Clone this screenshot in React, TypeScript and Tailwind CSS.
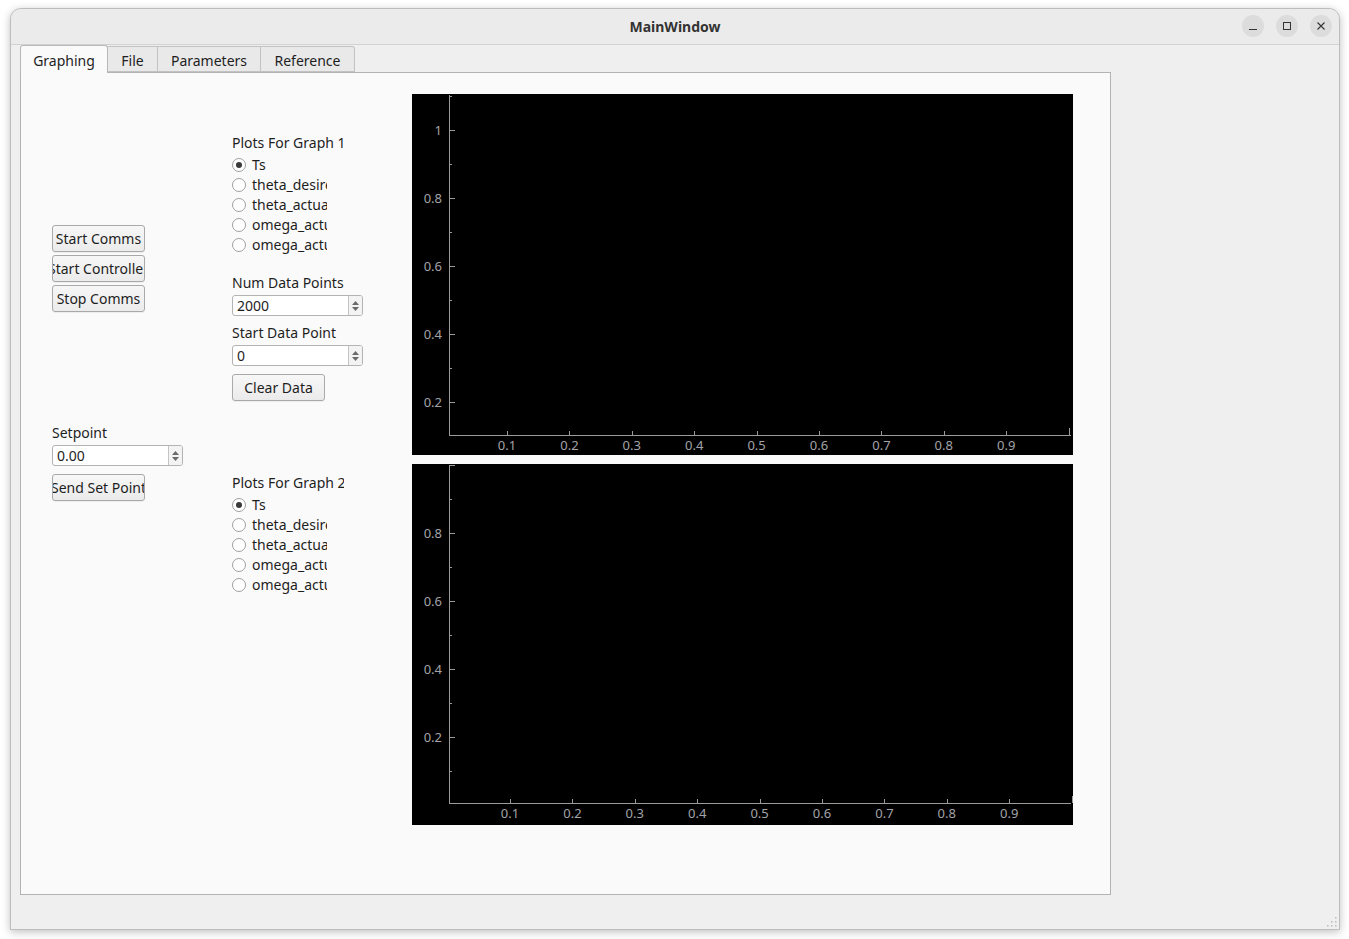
import React from 'react';

const FONT = { fontFamily: '"Noto Sans", "Open Sans", sans-serif' };

const Radio = ({ label, checked }: { label: string; checked?: boolean }) => (
  <div className="flex items-center h-5 w-[95px] overflow-hidden whitespace-nowrap">
    <span className="w-[14px] h-[14px] rounded-full border border-[#a0a0a0] bg-white grid place-items-center shrink-0">
      {checked && <span className="w-[6px] h-[6px] rounded-full bg-[#3a3a3a]" />}
    </span>
    <span className="ml-[6px] text-[14px] text-[#1e1e1e] leading-none">{label}</span>
  </div>
);

const Button = ({ label, w = 'w-[93px]' }: { label: string; w?: string }) => (
  <div
    className={`${w} h-[27px] flex items-center justify-center overflow-hidden whitespace-nowrap rounded-[3px] border border-[#a9a9a9] bg-gradient-to-b from-[#f7f7f7] to-[#ebebeb] text-[14px] text-[#1e1e1e] shadow-[0_1px_0_rgba(0,0,0,0.05)]`}
  >
    {label}
  </div>
);

const SpinBox = ({ value, w }: { value: string; w: string }) => (
  <div className={`${w} h-[21px] flex rounded-[3px] border border-[#b3b3b3] bg-white overflow-hidden`}>
    <div className="flex-1 flex items-center pl-[4px] text-[14px] text-[#1e1e1e] leading-none">{value}</div>
    <div className="w-[14px] border-l border-[#c4c4c4] bg-[#f3f3f3] flex flex-col items-center justify-center gap-[2px]">
      <svg width="7" height="4" viewBox="0 0 7 4">
        <path d="M0 4L3.5 0L7 4Z" fill="#6a6a6a" />
      </svg>
      <svg width="7" height="4" viewBox="0 0 7 4">
        <path d="M0 0L3.5 4L7 0Z" fill="#6a6a6a" />
      </svg>
    </div>
  </div>
);

interface PlotCfg {
  yTop: number;
  yBottom: number;
  y0: number; // pixel of value 0
  x0: number; // pixel of value 0 on x
  yTicks: number[];
  yLabels: number[];
}

const Plot = ({ cfg }: { cfg: PlotCfg }) => {
  const ax = 37;
  const grey = '#9a9a9a';
  const ypx = (v: number) => cfg.y0 - 340 * v;
  const xpx = (v: number) => cfg.x0 + 624 * v;
  const xs = [0.1, 0.2, 0.3, 0.4, 0.5, 0.6, 0.7, 0.8, 0.9];
  return (
    <svg width="661" height="361" viewBox="0 0 661 361" className="block bg-black">
      <line x1={ax + 0.5} y1={cfg.yTop} x2={ax + 0.5} y2={cfg.yBottom + 0.5} stroke={grey} />
      <line x1={ax} y1={cfg.yBottom + 0.5} x2={659} y2={cfg.yBottom + 0.5} stroke={grey} />
      {cfg.yTicks.map((v) => {
        const major = cfg.yLabels.includes(v) || Math.abs(v - 1) < 0.001;
        const y = Math.round(ypx(v)) + 0.5;
        return <line key={v} x1={ax} y1={y} x2={ax + (major ? 6 : 3)} y2={y} stroke={grey} />;
      })}
      {cfg.yLabels.map((v) => (
        <text key={v} x={30} y={ypx(v) + 5} textAnchor="end" fill="#a3a3a8" fontSize="13" style={FONT}>
          {v === 1 ? '1' : v.toFixed(1)}
        </text>
      ))}
      {[...xs, 1].map((v) => {
        const x = Math.round(xpx(v)) + 0.5;
        return (
          <line key={v} x1={x} y1={cfg.yBottom} x2={x} y2={cfg.yBottom - (v === 1 ? 7 : 4)} stroke={grey} />
        );
      })}
      {xs.map((v) => (
        <text key={v} x={xpx(v)} y={cfg.yBottom + 15} textAnchor="middle" fill="#a3a3a8" fontSize="13" style={FONT}>
          {v.toFixed(1)}
        </text>
      ))}
    </svg>
  );
};

const plot1: PlotCfg = {
  yTop: 1,
  yBottom: 341,
  y0: 376,
  x0: 32.6,
  yTicks: [0.2, 0.3, 0.4, 0.5, 0.6, 0.7, 0.8, 0.9, 1.0, 1.1],
  yLabels: [0.2, 0.4, 0.6, 0.8, 1],
};

const plot2: PlotCfg = {
  yTop: 1,
  yBottom: 339,
  y0: 341,
  x0: 35.6,
  yTicks: [0.1, 0.2, 0.3, 0.4, 0.5, 0.6, 0.7, 0.8, 0.9, 1.0],
  yLabels: [0.2, 0.4, 0.6, 0.8],
};

const PlotChoices = ({ n }: { n: number }) => (
  <div className="flex flex-col">
    <div className="w-[112px] h-[17px] overflow-hidden whitespace-nowrap text-[14px] text-[#1e1e1e] leading-[17px]">
      Plots For Graph {n}
    </div>
    <div className="flex flex-col mt-[4px]">
      <Radio label="Ts" checked />
      <Radio label="theta_desired" />
      <Radio label="theta_actual" />
      <Radio label="omega_actual" />
      <Radio label="omega_actual" />
    </div>
  </div>
);

export default function App() {
  return (
    <div className="w-[1349px] h-[939px] bg-white overflow-hidden" style={FONT}>
      <div className="ml-[10px] mt-[8px] w-[1330px] h-[922px] flex flex-col rounded-t-[11px] border border-[#bdbdbd] bg-[#efefef] shadow-[0_2px_8px_rgba(0,0,0,0.25)] overflow-hidden">
        {/* Title bar */}
        <div className="h-[36px] shrink-0 flex items-center bg-[#ebebeb] border-b border-[#d2d2d2] relative">
          <div className="flex-1 text-center text-[14px] font-bold text-[#333333]">MainWindow</div>
          <div className="absolute right-[7px] top-[6px] flex gap-[12px]">
            <span className="w-[22px] h-[22px] rounded-full bg-[#dcdcdc] grid place-items-center">
              <svg width="10" height="10" viewBox="0 0 10 10">
                <line x1="1" y1="8.5" x2="9" y2="8.5" stroke="#333" strokeWidth="1" />
              </svg>
            </span>
            <span className="w-[22px] h-[22px] rounded-full bg-[#dcdcdc] grid place-items-center">
              <svg width="10" height="10" viewBox="0 0 10 10">
                <rect x="1.5" y="1.5" width="7" height="7" fill="none" stroke="#333" strokeWidth="1" />
              </svg>
            </span>
            <span className="w-[22px] h-[22px] rounded-full bg-[#dcdcdc] grid place-items-center">
              <svg width="10" height="10" viewBox="0 0 10 10">
                <path d="M1.5 1.5L8.5 8.5M8.5 1.5L1.5 8.5" stroke="#333" strokeWidth="1.1" />
              </svg>
            </span>
          </div>
        </div>

        {/* Body */}
        <div className="flex-1 pl-[9px] relative">
          {/* Tabs */}
          <div className="flex items-end h-[27px]">
            <div className="w-[88px] h-[28px] -mb-px z-10 flex items-center justify-center pt-[2px] bg-[#fafafa] border border-b-0 border-[#b8b8b8] rounded-t-[3px] text-[14px] text-[#1e1e1e]">
              Graphing
            </div>
            <div className="w-[50px] h-[26px] flex items-center justify-center pt-[2px] bg-[#e9e9e9] border border-l-0 border-[#c2c2c2] text-[14px] text-[#1e1e1e]">
              File
            </div>
            <div className="w-[103px] h-[26px] flex items-center justify-center pt-[2px] bg-[#e9e9e9] border border-l-0 border-[#c2c2c2] text-[14px] text-[#1e1e1e]">
              Parameters
            </div>
            <div className="w-[94px] h-[26px] flex items-center justify-center pt-[2px] bg-[#e9e9e9] border border-l-0 border-[#c2c2c2] rounded-tr-[3px] text-[14px] text-[#1e1e1e]">
              Reference
            </div>
          </div>

          {/* Pane */}
          <div className="w-[1091px] h-[823px] bg-[#fafafa] border border-[#b3b3b3] flex pt-[21px] pl-[31px]">
            {/* Column 1 */}
            <div className="w-[180px] flex flex-col pt-[131px]">
              <div className="flex flex-col gap-[3px]">
                <Button label="Start Comms" />
                <Button label="Start Controller" />
                <Button label="Stop Comms" />
              </div>
              <div className="mt-[112px] text-[14px] text-[#1e1e1e] leading-[17px]">Setpoint</div>
              <div className="mt-[4px]">
                <SpinBox value="0.00" w="w-[131px]" />
              </div>
              <div className="mt-[8px]">
                <Button label="Send Set Point" />
              </div>
            </div>

            {/* Column 2 */}
            <div className="w-[180px] flex flex-col pt-[40px]">
              <PlotChoices n={1} />
              <div className="mt-[19px] w-[112px] overflow-hidden whitespace-nowrap text-[14px] text-[#1e1e1e] leading-[17px]">
                Num Data Points
              </div>
              <div className="mt-[4px]">
                <SpinBox value="2000" w="w-[131px]" />
              </div>
              <div className="mt-[8px] text-[14px] text-[#1e1e1e] leading-[17px] whitespace-nowrap">Start Data Point</div>
              <div className="mt-[4px]">
                <SpinBox value="0" w="w-[131px]" />
              </div>
              <div className="mt-[8px]">
                <Button label="Clear Data" />
              </div>
              <div className="mt-[73px]">
                <PlotChoices n={2} />
              </div>
            </div>

            {/* Column 3: plots */}
            <div className="flex flex-col gap-[9px]">
              <Plot cfg={plot1} />
              <Plot cfg={plot2} />
            </div>
          </div>

          {/* resize grip */}
          <svg className="absolute right-[2px] bottom-[2px]" width="12" height="12" viewBox="0 0 12 12">
            {[
              [10, 2],
              [10, 6],
              [6, 6],
              [10, 10],
              [6, 10],
              [2, 10],
            ].map(([x, y], i) => (
              <rect key={i} x={x} y={y} width="1.5" height="1.5" fill="#bcbcbc" />
            ))}
          </svg>
        </div>
      </div>
    </div>
  );
}
